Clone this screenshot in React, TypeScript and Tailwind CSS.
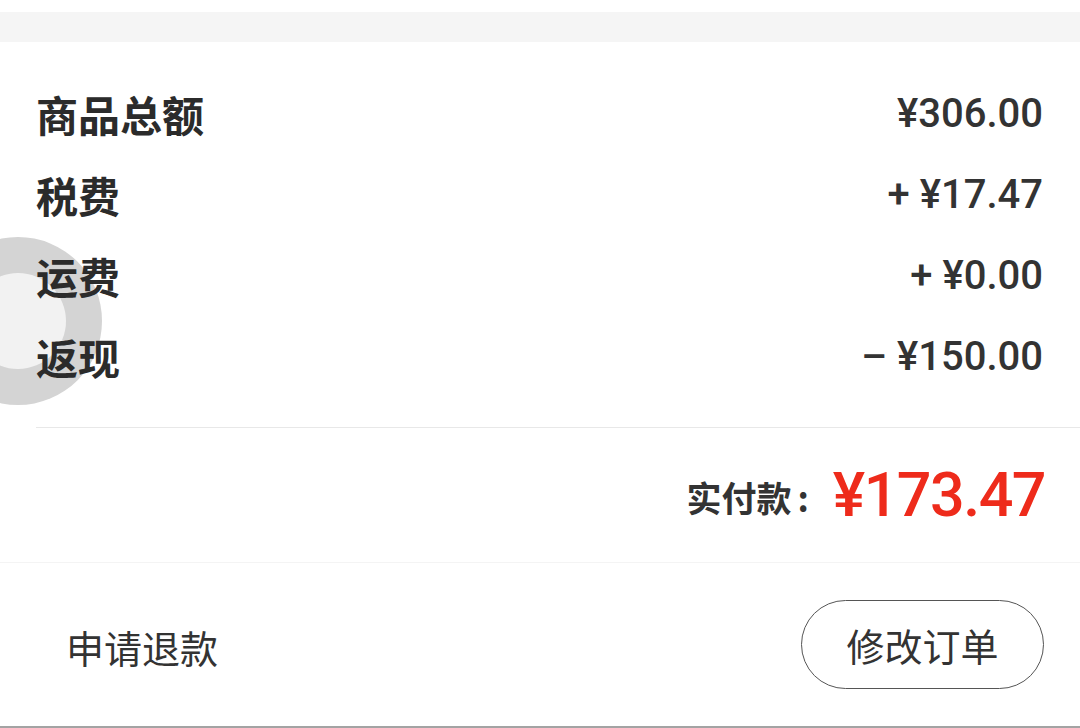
const rows = [
  { label: "商品总额", value: "¥306.00" },
  { label: "税费", value: "+ ¥17.47" },
  { label: "运费", value: "+ ¥0.00" },
  { label: "返现", value: "– ¥150.00" },
];

const cjk = "font-['Noto_Sans_CJK_SC',sans-serif]";
const num = "font-['Roboto','Noto_Sans_CJK_SC',sans-serif]";

export default function App() {
  return (
    <div className="w-[1080px] h-[728px] bg-white flex flex-col overflow-hidden">
      <div className="h-[12px] bg-white" />
      <div className="h-[30px] bg-[#f5f5f5]" />

      <div className="relative flex flex-col pt-[31px] pb-[30px]">
        {/* floating assistive button */}
        <div className="absolute left-[-66px] top-[195px] w-[168px] h-[168px] rounded-full bg-[#d4d4d4] flex items-center justify-center">
          <div className="w-[96px] h-[96px] rounded-full bg-[#f2f2f2]" />
        </div>

        {rows.map((r) => (
          <div
            key={r.label}
            className="relative z-10 h-[81px] flex items-center justify-between pl-[36px] pr-[37px]"
          >
            <span className={`${cjk} text-[42px] font-bold text-[#2b2b2b] leading-none`}>
              {r.label}
            </span>
            <span className={`${num} text-[40px] font-medium text-[#333333] leading-none`}>
              {r.value}
            </span>
          </div>
        ))}
      </div>

      <div className="ml-[36px] h-px bg-[#e8e8e8]" />

      <div className="h-[134px] flex items-center justify-end pr-[35px]">
        <span className={`${cjk} text-[35px] font-bold text-[#333333] leading-none mt-[2px]`}>
          实付款
        </span>
        <span className={`${cjk} text-[35px] font-bold text-[#333333] leading-none mt-[2px] ml-[6px] mr-[24px]`}>
          :
        </span>
        <span className={`${num} text-[61px] font-medium text-[#ee2b1b] leading-none tracking-[-1.5px]`}>
          ¥173.47
        </span>
      </div>

      <div className="h-px bg-[#f4f4f4]" />

      <div className="h-[163px] flex items-center justify-between pl-[66px] pr-[36px]">
        <span className={`${cjk} text-[38px] text-[#333333] leading-none mt-[5px]`}>
          申请退款
        </span>
        <button
          className={`${cjk} w-[243px] h-[89px] rounded-full border-[1.5px] border-[#555555] text-[38px] text-[#333333] leading-none flex items-center justify-center`}
        >
          修改订单
        </button>
      </div>

      <div className="h-[2px] bg-[#a3a3a3]" />
    </div>
  );
}
